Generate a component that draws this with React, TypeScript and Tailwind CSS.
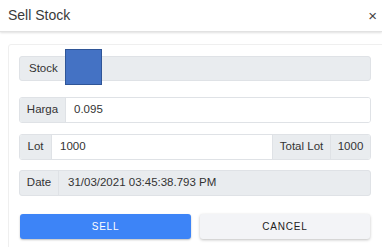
export default function App() {
  return (
    <div className="w-[382px] h-[247px] overflow-hidden bg-white font-['Liberation_Sans',Arial,sans-serif] text-[#333]">
      <div className="h-[32px] flex items-center justify-between pl-[8px] pr-[5px] border-b border-[#e2e2e2] shadow-[0_1px_2px_rgba(0,0,0,0.12)]">
        <span className="text-[14px] text-[#3a3a3a]">Sell Stock</span>
        <span className="text-[15px] leading-none text-[#444]">×</span>
      </div>
      <div className="pl-[8px] pt-[12px]">
        <div className="w-[380px] border border-[#efefef] rounded-[3px] pt-[11px] pl-[10px] pb-[10px] text-[11.5px]">
          <div className="relative w-[352px] h-[25px] flex items-center bg-[#e9ecef] border border-[#dfe2e6] rounded-[3px]">
            <span className="pl-[9px]">Stock</span>
            <div className="absolute left-[45px] top-[-8px] w-[37px] h-[36px] bg-[#4472c4] border border-[#2f5597]" />
          </div>
          <div className="mt-[16px] w-[352px] h-[26px] flex border border-[#dfe2e6] rounded-[3px] overflow-hidden">
            <span className="w-[46px] flex items-center justify-center bg-[#e9ecef] border-r border-[#dfe2e6]">Harga</span>
            <span className="flex-1 flex items-center pl-[8px] bg-white">0.095</span>
          </div>
          <div className="mt-[11px] w-[352px] h-[26px] flex border border-[#dfe2e6] rounded-[3px] overflow-hidden">
            <span className="w-[32px] flex items-center justify-center bg-[#e9ecef] border-r border-[#dfe2e6]">Lot</span>
            <span className="flex-1 flex items-center pl-[8px] bg-white">1000</span>
            <span className="w-[58px] flex items-center justify-center bg-[#e9ecef] border-l border-[#dfe2e6]">Total Lot</span>
            <span className="w-[40px] flex items-center justify-center bg-[#e9ecef] border-l border-[#dfe2e6]">1000</span>
          </div>
          <div className="mt-[10px] w-[352px] h-[26px] flex border border-[#dfe2e6] rounded-[3px] overflow-hidden bg-[#e9ecef]">
            <span className="w-[39px] flex items-center justify-center border-r border-[#dfe2e6]">Date</span>
            <span className="flex-1 flex items-center pl-[9px]">31/03/2021 03:45:38.793 PM</span>
          </div>
          <div className="mt-[18px] w-[352px] flex gap-[9px] pl-[1px]">
            <button className="w-[171px] h-[25px] rounded-[3px] bg-[#3d84f7] text-white text-[10px] tracking-[0.08em] shadow-[0_1px_2px_rgba(0,0,0,0.25)]">
              SELL
            </button>
            <button className="w-[170px] h-[25px] rounded-[3px] bg-[#f3f4f7] text-[#222] text-[10px] tracking-[0.08em] shadow-[0_1px_3px_rgba(0,0,0,0.25)]">
              CANCEL
            </button>
          </div>
        </div>
      </div>
    </div>
  );
}
